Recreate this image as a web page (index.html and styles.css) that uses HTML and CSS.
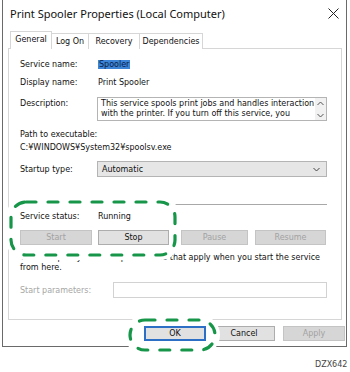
FILE: index.html
```html
<!DOCTYPE html>
<html lang="en">

<head>
    <meta charset="UTF-8">
    <title>Print Spooler Properties</title>
    <link rel="stylesheet" href="styles.css">
</head>

<body>
    <div class="page">
        <div class="dialog">
            <div class="titlebar">
                <span class="title">Print Spooler Properties (Local Computer)</span>
                <svg class="close" width="11" height="11" viewBox="0 0 11 11">
                    <path d="M0.5 0.5 L10.5 10.5 M10.5 0.5 L0.5 10.5" stroke="#222" stroke-width="1" fill="none" />
                </svg>
            </div>

            <div class="tabs">
                <div class="tab active tab-general">General</div>
                <div class="tab tab-logon">Log On</div>
                <div class="tab tab-recovery">Recovery</div>
                <div class="tab tab-deps">Dependencies</div>
            </div>

            <div class="panel">
                <div class="row row-name">
                    <span class="label">Service name:</span>
                    <span class="value"><span class="selected">Spooler</span></span>
                </div>
                <div class="row row-display">
                    <span class="label">Display name:</span>
                    <span class="value">Print Spooler</span>
                </div>
                <div class="row row-desc">
                    <span class="label">Description:</span>
                    <div class="textbox">
                        <div class="textbox-text">This service spools print jobs and handles interaction<br>with the printer. If you turn off this service, you</div>
                        <div class="scroller">
                            <svg width="7" height="5" viewBox="0 0 7 5"><path d="M0.5 4 L3.5 1 L6.5 4" stroke="#555" fill="none" /></svg>
                            <svg width="7" height="5" viewBox="0 0 7 5"><path d="M0.5 1 L3.5 4 L6.5 1" stroke="#555" fill="none" /></svg>
                        </div>
                    </div>
                </div>
                <div class="path-label">Path to executable:</div>
                <div class="path-value">C:¥WINDOWS¥System32¥spoolsv.exe</div>
                <div class="row row-startup">
                    <span class="label">Startup type:</span>
                    <div class="combo">
                        <span>Automatic</span>
                        <svg width="7" height="5" viewBox="0 0 7 5"><path d="M0.5 1 L3.5 4 L6.5 1" stroke="#444" fill="none" /></svg>
                    </div>
                </div>
                <div class="separator"></div>
                <div class="row row-status raised">
                    <span class="label">Service status:</span>
                    <span class="value">Running</span>
                </div>
                <div class="actions raised">
                    <button class="btn disabled btn-start">Start</button>
                    <button class="btn btn-stop">Stop</button>
                    <button class="btn disabled btn-pause">Pause</button>
                    <button class="btn disabled btn-resume">Resume</button>
                </div>
                <p class="hint">You can specify the start parameters that apply when you start the service<br>from here.</p>
                <div class="row row-params">
                    <span class="label muted">Start parameters:</span>
                    <div class="input"></div>
                </div>
            </div>

            <div class="footer">
                <button class="btn btn-ok raised">OK</button>
                <button class="btn">Cancel</button>
                <button class="btn disabled">Apply</button>
            </div>
        </div>

        <div class="code">DZX642</div>

        <svg class="marks" width="350" height="372" viewBox="0 0 350 372">
            <rect x="11" y="202" width="164" height="53" rx="15" fill="#fff" stroke="#fff" stroke-width="10" />
            <rect x="11" y="202" width="164" height="53" rx="15" fill="none" stroke="#17964a" stroke-width="3.2" stroke-dasharray="10 12" stroke-linecap="round" />
            <rect x="130" y="320" width="85" height="30" rx="15" fill="#fff" stroke="#fff" stroke-width="10" />
            <rect x="130" y="320" width="85" height="30" rx="15" fill="none" stroke="#17964a" stroke-width="3.2" stroke-dasharray="10 12" stroke-linecap="round" />
        </svg>
    </div>
</body>

</html>
```

FILE: styles.css
```css
body {
    margin: 0;
    background: #fff;
    font-family: 'DejaVu Sans', sans-serif;
    font-size: 8px;
    color: #111;
}

.page {
    position: relative;
    width: 350px;
    height: 372px;
    overflow: hidden;
}

.dialog {
    box-sizing: border-box;
    width: 345px;
    height: 347px;
    margin-left: 2px;
    border: 1px solid #6a6a6a;
    border-top: none;
    background: #fff;
}

.titlebar {
    height: 27px;
    display: flex;
    align-items: center;
    justify-content: space-between;
    padding: 0 7px;
}

.title {
    font-family: 'Noto Sans', sans-serif;
    font-size: 11px;
    color: #111;
}

.tabs {
    display: flex;
    align-items: flex-end;
    height: 18px;
    margin: 4px 0 -1px 7px;
    position: relative;
    z-index: 1;
}

.tab {
    box-sizing: border-box;
    height: 16px;
    border: 1px solid #d6d6d6;
    border-bottom: none;
    border-left: none;
    background: #fff;
    display: flex;
    align-items: center;
    justify-content: center;
}

.tab.active {
    height: 18px;
    border-left: 1px solid #d6d6d6;
    padding-bottom: 2px;
}

.tab-general { width: 42px; }
.tab-logon { width: 37px; }
.tab-recovery { width: 51px; }
.tab-deps { width: 63px; }

.panel {
    box-sizing: border-box;
    height: 272px;
    margin: 0 4px 0 5px;
    border: 1px solid #d6d6d6;
    padding: 8px 14px 0 11px;
}

.row {
    display: flex;
    align-items: center;
    height: 14px;
}

.label {
    width: 78px;
    flex: none;
}

.selected {
    background: #3b84d6;
    color: #0b1c45;
    padding: 0 1px;
}

.row-display {
    margin-top: 4px;
}

.row-desc {
    margin-top: 8px;
    height: 24px;
    align-items: flex-start;
}

.row-desc .label {
    line-height: 14px;
}

.textbox {
    box-sizing: border-box;
    flex: 1;
    height: 24px;
    margin-left: -1px;
    border: 1px solid #b4b4b4;
    display: flex;
}

.textbox-text {
    flex: 1;
    padding: 1px 0 0 3px;
    line-height: 9.5px;
    white-space: nowrap;
    overflow: hidden;
}

.scroller {
    width: 11px;
    background: #f1f1f1;
    display: flex;
    flex-direction: column;
    align-items: center;
    justify-content: space-between;
    padding: 3px 0 2px;
}

.path-label {
    margin-top: 7px;
    line-height: 13px;
}

.path-value {
    line-height: 13px;
}

.row-startup {
    margin-top: 7px;
    height: 16px;
}

.combo {
    box-sizing: border-box;
    flex: 1;
    height: 16px;
    margin-left: -1px;
    border: 1px solid #b4b4b4;
    background: #e6e6e6;
    display: flex;
    align-items: center;
    justify-content: space-between;
    padding: 0 6px 0 4px;
}

.separator {
    height: 1px;
    margin-top: 27px;
    background: #a8a8a8;
}

.row-status {
    margin-top: 4px;
}

.raised {
    position: relative;
    z-index: 2;
}

.actions {
    display: flex;
    height: 15px;
    margin-top: 7px;
}

.btn {
    box-sizing: border-box;
    height: 15px;
    margin: 0;
    padding: 0;
    border: 1px solid #adadad;
    background: #e1e1e1;
    font-family: 'DejaVu Sans', sans-serif;
    font-size: 8px;
    color: #111;
}

.btn.disabled {
    border-color: #c4c4c4;
    background: #d6d6d6;
    color: #a2a2a2;
}

.btn-start { width: 72px; }
.btn-stop { width: 71px; margin-left: 6px; }
.btn-pause { width: 67px; margin-left: 12px; }
.btn-resume { width: 71px; margin-left: 7px; }

.hint {
    margin: 8px 0 0;
    line-height: 10px;
    white-space: nowrap;
}

.row-params {
    margin-top: 9px;
    height: 16px;
}

.row-params .label {
    width: 93px;
}

.muted {
    color: #a6a6a6;
}

.input {
    box-sizing: border-box;
    flex: 1;
    height: 16px;
    border: 1px solid #d2d2d2;
    background: #fff;
}

.footer {
    display: flex;
    justify-content: flex-end;
    gap: 7px;
    margin-top: 6px;
    padding-right: 1px;
}

.footer .btn {
    width: 62px;
}

.footer .btn + .btn + .btn {
    margin-left: 1px;
}

.btn-ok {
    border: 2px solid #2d6fc4;
}

.code {
    margin: 13px 0 0 315px;
    font-size: 8px;
    color: #444;
}

.marks {
    position: absolute;
    top: 0;
    left: 0;
    z-index: 1;
    pointer-events: none;
}
```
